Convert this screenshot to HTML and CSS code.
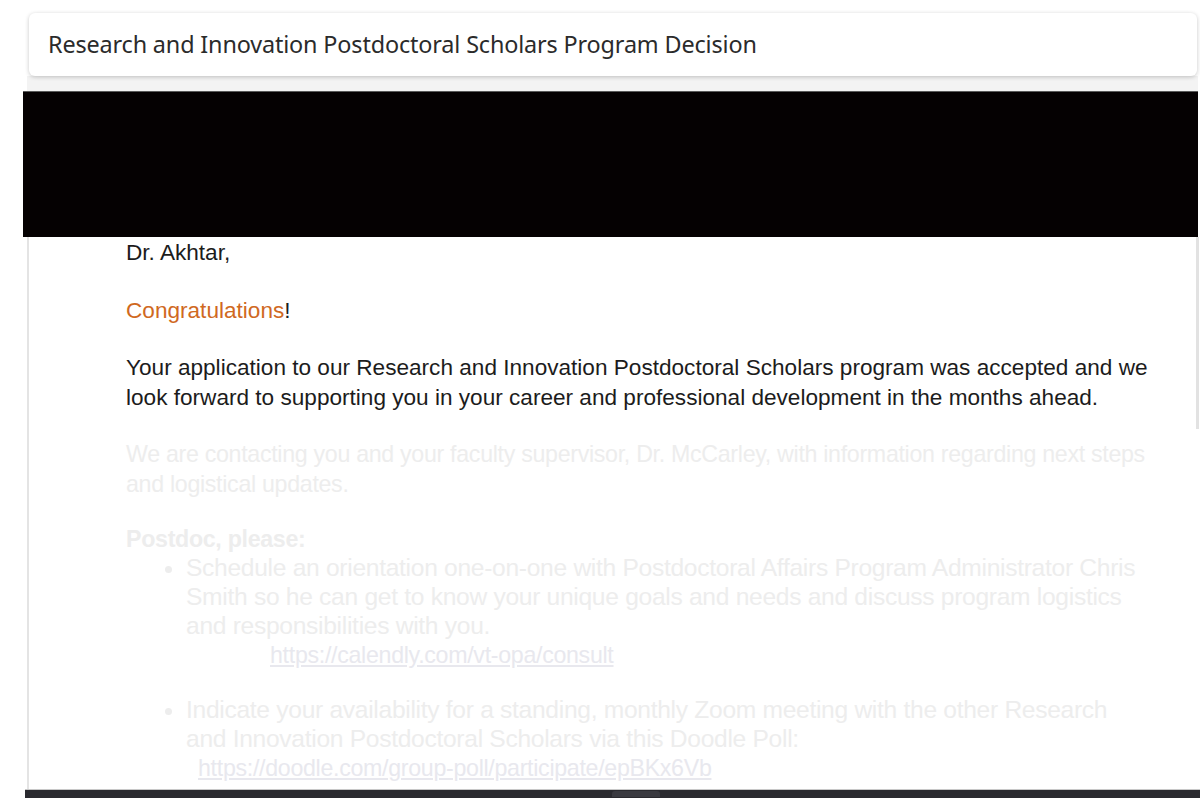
FILE: index.html
```html
<!DOCTYPE html>
<html lang="en">
<head>
<meta charset="utf-8">
<title>Research and Innovation Postdoctoral Scholars Program Decision</title>
<link rel="stylesheet" href="styles.css">
</head>
<body>
<div class="page">
  <header class="title-card">
    <h1 class="title">Research and Innovation Postdoctoral Scholars Program Decision</h1>
  </header>
  <section class="viewer">
    <div class="gap-strip"></div>
    <div class="redacted"></div>
    <div class="letter">
      <div class="scroll-thumb"></div>
      <p class="line">Dr. Akhtar,</p>
      <p class="line para"><span class="accent">Congratulations</span>!</p>
      <p class="line para">Your application to our Research and Innovation Postdoctoral Scholars program was accepted and we look forward to supporting you in your career and professional development in the months ahead.</p>
      <div class="faded">
        <p class="para">We are contacting you and your faculty supervisor, Dr. McCarley, with information regarding next steps and logistical updates.</p>
        <p class="para heading">Postdoc, please:</p>
        <ul class="steps">
          <li>Schedule an orientation one-on-one with Postdoctoral Affairs Program Administrator Chris Smith so he can get to know your unique goals and needs and discuss program logistics and responsibilities with you.
            <span class="link-line indent-a"><a href="#">https://calendly.com/vt-opa/consult</a></span>
          </li>
          <li class="second">Indicate your availability for a standing, monthly Zoom meeting with the other Research and Innovation Postdoctoral Scholars via this Doodle Poll:
            <span class="link-line indent-b"><a href="#">https://doodle.com/group-poll/participate/epBKx6Vb</a></span>
          </li>
        </ul>
      </div>
    </div>
    <div class="taskbar"><span class="tab"></span></div>
  </section>
</div>
</body>
</html>
```
FILE: styles.css
```css
html, body {
  margin: 0;
  padding: 0;
  background: #ffffff;
  height: 798px;
  overflow: hidden;
}

.page {
  width: 1200px;
  height: 798px;
  display: flex;
  flex-direction: column;
  padding-top: 13px;
  box-sizing: border-box;
}

.title-card {
  margin-left: 29px;
  width: 1168px;
  height: 63px;
  background: #ffffff;
  border-radius: 6px;
  box-shadow: 0 1px 4px rgba(0, 0, 0, 0.22);
  display: flex;
  align-items: center;
  padding-left: 19px;
  box-sizing: border-box;
  position: relative;
  z-index: 1;
}

.title {
  margin: 0;
  font-family: "Noto Sans", "Open Sans", sans-serif;
  font-weight: 400;
  font-size: 23.4px;
  letter-spacing: -0.15px;
  color: #2b2b2b;
  padding-bottom: 2px;
}

.viewer {
  margin-left: 23px;
  width: 1175px;
  flex: 1;
  display: flex;
  flex-direction: column;
  position: relative;
}

.gap-strip {
  height: 15px;
  background: #f3f3f3;
  margin-left: 4px;
}

.redacted {
  height: 146px;
  background: #050102;
  border-top: 1px solid #5a5a5a;
  box-sizing: border-box;
}

.letter {
  flex: 1;
  border-left: 2px solid #e4e4e4;
  margin-left: 4px;
  padding-left: 97px;
  padding-right: 38px;
  padding-top: 1px;
  position: relative;
  font-family: "Liberation Sans", Arial, sans-serif;
  font-size: 22.6px;
  line-height: 29.5px;
  color: #1c1c1c;
}

.scroll-thumb {
  position: absolute;
  right: -1px;
  top: 0;
  width: 3px;
  height: 192px;
  background: #e2e2e2;
}

.line,
.para {
  margin: 0;
}

.para {
  margin-top: 28px;
}

.accent {
  color: #d0691f;
}

.faded {
  color: #ededed;
  font-size: 23.2px;
  letter-spacing: -0.3px;
}

.faded .para {
  margin-top: 28px;
}

.faded .heading {
  font-weight: 700;
  margin-top: 26px;
  line-height: 28px;
}

.steps {
  margin: 0 12px 0 0;
  padding-left: 60px;
  line-height: 29px;
  font-size: 24.6px;
}

.steps li {
  margin: 0;
}

.steps li.second {
  margin-top: 25px;
}

.link-line {
  display: block;
  margin-top: 1px;
  font-size: 23.2px;
}

.indent-a {
  padding-left: 84px;
}

.indent-b {
  padding-left: 12px;
}

.link-line a {
  color: #e8e8ee;
  text-decoration: underline;
}

.taskbar {
  position: absolute;
  left: 2px;
  right: -25px;
  bottom: 0;
  height: 8px;
  background: #2a2a2f;
  border-top: 1px solid #c8c8c8;
}

.tab {
  position: absolute;
  left: 587px;
  top: 1px;
  width: 48px;
  height: 6px;
  border-radius: 3px 3px 0 0;
  background: #3a3a40;
}
```
